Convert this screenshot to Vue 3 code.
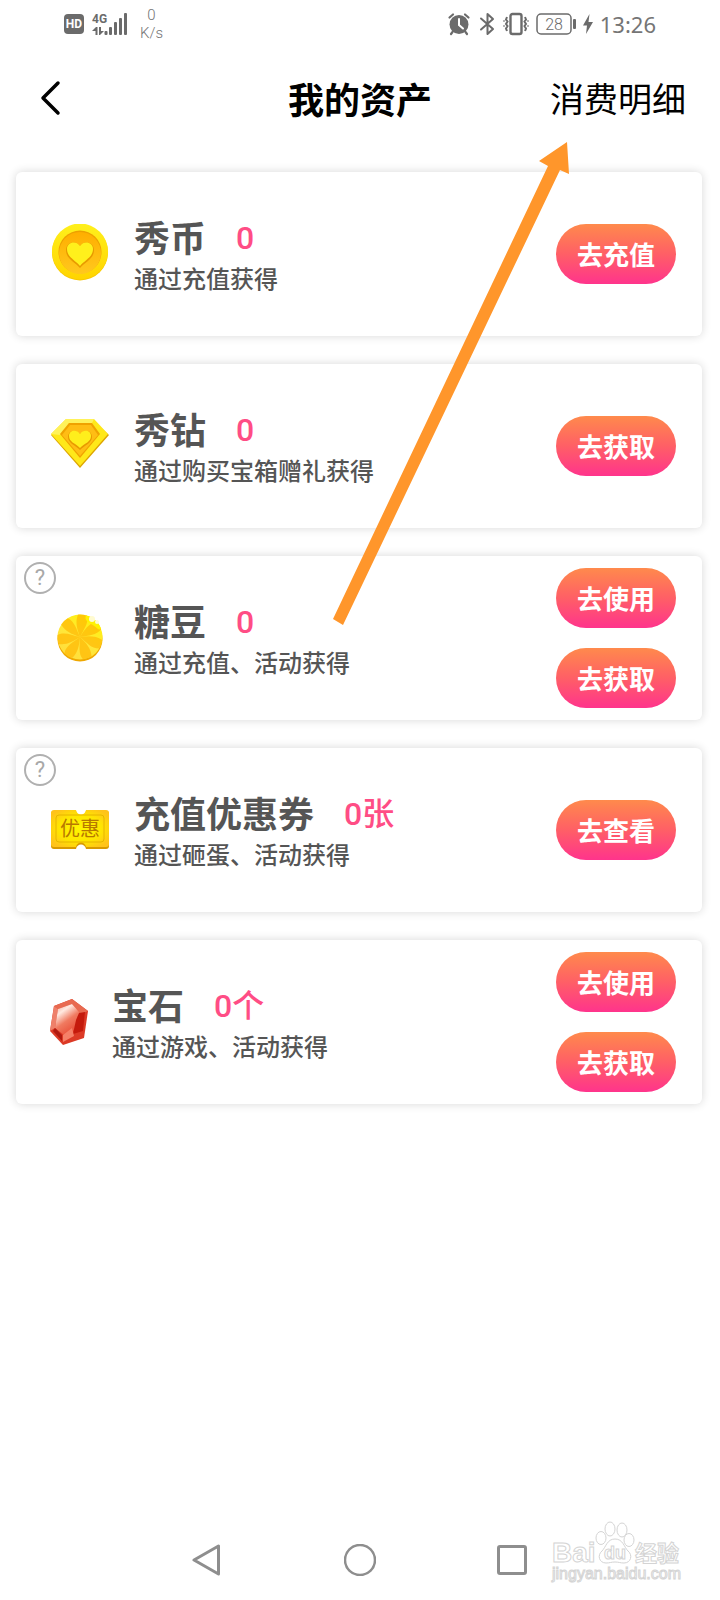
<script setup>
const assets = [
  { icon: 'coin', name: '秀币', value: '0', desc: '通过充值获得', help: false, actions: ['去充值'] },
  { icon: 'diamond', name: '秀钻', value: '0', desc: '通过购买宝箱赠礼获得', help: false, actions: ['去获取'] },
  { icon: 'candy', name: '糖豆', value: '0', desc: '通过充值、活动获得', help: true, actions: ['去使用', '去获取'] },
  { icon: 'coupon', name: '充值优惠券', value: '0张', desc: '通过砸蛋、活动获得', help: true, actions: ['去查看'] },
  { icon: 'gem', name: '宝石', value: '0个', desc: '通过游戏、活动获得', help: false, actions: ['去使用', '去获取'] },
]

// blades of the candy swirl, in degrees
const blades = Array.from({ length: 7 }, (_, i) => (i * 360) / 7)
</script>

<template>
  <div class="page">
    <div class="status">
      <div class="status-left">
        <svg width="20" height="20" viewBox="0 0 20 20">
          <rect width="20" height="20" rx="4" fill="#6b6b6b" />
          <text x="10" y="14" class="hd" text-anchor="middle">HD</text>
        </svg>
        <svg width="36" height="24" viewBox="0 0 36 24">
          <text x="0" y="11" class="fourg">4G</text>
          <g fill="#6b6b6b">
            <path d="M0 19 4 15h1.500v8H3.500v-4z" />
            <path d="M7 15h2v4h3l-4 4H7z" />
            <rect x="12.500" y="19" width="3" height="4" rx="1" />
            <rect x="17" y="15" width="3" height="8" rx="1" />
            <rect x="22" y="10" width="3" height="13" rx="1" />
            <rect x="27" y="6" width="3" height="17" rx="1" />
            <rect x="32" y="1" width="3" height="22" rx="1" />
          </g>
        </svg>
        <div class="speed"><span>0</span><span>K/s</span></div>
      </div>
      <div class="status-right">
        <svg width="24" height="24" viewBox="0 0 24 24">
          <g fill="none" stroke="#6b6b6b" stroke-width="2.200" stroke-linecap="round">
            <path d="M2.500 5.500 6 2.500M21.500 5.500 18 2.500M5.500 20 4 22M18.500 20 20 22" />
          </g>
          <circle cx="12" cy="12.500" r="9.500" fill="#6b6b6b" />
          <path d="M12 7v6l4 3.500" fill="none" stroke="#fff" stroke-width="2" stroke-linecap="round" />
        </svg>
        <svg width="18" height="24" viewBox="0 0 18 24">
          <path d="M3 6.500 15 17l-5.500 5V2L15 7 3 17.500" fill="none" stroke="#6b6b6b" stroke-width="2" stroke-linejoin="round" stroke-linecap="round" />
        </svg>
        <svg width="26" height="24" viewBox="0 0 26 24">
          <g fill="none" stroke="#6b6b6b" stroke-width="2">
            <rect x="7.500" y="2" width="11" height="20" rx="2" stroke-width="2.400" />
            <path d="M4 5l-1 2.500 1.500 2L3 12l1.500 2L3 16.500 4 19M22 5l1 2.500-1.500 2L23 12l-1.500 2 1.500 2.500L22 19" />
            <path d="M1 8v2M1 13v2M25 8v2M25 13v2" stroke-width="1" />
          </g>
        </svg>
        <svg width="40" height="22" viewBox="0 0 40 22">
          <rect x="1" y="1" width="34" height="20" rx="4" fill="none" stroke="#6b6b6b" stroke-width="1.500" />
          <rect x="37" y="6" width="3" height="10" rx="1" fill="#6b6b6b" />
          <text x="18" y="17" class="level" text-anchor="middle">28</text>
        </svg>
        <svg width="10" height="22" viewBox="0 0 10 22">
          <path d="M6.500 1 0 12.500h4L3 21l7-12H5.500z" fill="#6b6b6b" />
        </svg>
        <span class="time">13:26</span>
      </div>
    </div>

    <header class="header">
      <button class="back" aria-label="返回">
        <svg width="30" height="36" viewBox="0 0 30 36">
          <path d="M24 3 9 18l15 15" fill="none" stroke="#000" stroke-width="3.500" stroke-linecap="round" stroke-linejoin="round" />
        </svg>
      </button>
      <h1 class="title">我的资产</h1>
      <a class="detail" href="#">消费明细</a>
    </header>

    <main class="list">
      <section v-for="a in assets" :key="a.name" class="card">
        <button v-if="a.help" class="help" aria-label="说明">?</button>

        <svg v-if="a.icon === 'coin'" class="icon" width="60" height="60" viewBox="0 0 60 60">
          <defs>
            <linearGradient id="coinRim" x1="0" y1="0" x2="0" y2="1">
              <stop offset="0" stop-color="#fff01c" />
              <stop offset="1" stop-color="#ffd400" />
            </linearGradient>
            <linearGradient id="coinIn" x1="0" y1="0" x2="0" y2="1">
              <stop offset="0" stop-color="#ffae00" />
              <stop offset="1" stop-color="#ffc81e" />
            </linearGradient>
          </defs>
          <circle cx="30" cy="28.500" r="28" fill="#f8c800" />
          <circle cx="30" cy="27.500" r="28" fill="url(#coinRim)" />
          <circle cx="30" cy="28" r="21.500" fill="#eda000" />
          <circle cx="30" cy="29" r="21" fill="url(#coinIn)" />
          <path d="M30 44C25 38 16 35 16 26c0-8 10-10 14-4 4-6 14-4 14 4 0 9-9 12-14 18z" fill="#e89a00" />
          <path d="M30 42C25 36 17 33 17 25c0-7 9-9 13-3 4-6 13-4 13 3 0 8-8 11-13 17z" fill="#fff01c" />
        </svg>

        <svg v-else-if="a.icon === 'diamond'" class="icon" width="60" height="60" viewBox="0 2 60 60">
          <path d="M16 7h28l15 14-29 33L1 21z" fill="#dda400" />
          <path d="M16 5h28l14 15-28 32L1 20z" fill="#ffe81a" />
          <path d="M16 5 19 9h23l2-4zM1 20l9 1 9-12-3-4z" fill="#fff25a" />
          <path d="M19 9h23l8 11-20 24L10 20z" fill="#f0a200" />
          <path d="M20 11h21l7 10-18 21-18-21z" fill="#ffbd14" />
          <path d="M30 36c-5-5-12-7-12-13 0-7 8-8 12-3 4-5 12-4 12 3 0 6-7 8-12 13z" fill="#e89a00" />
          <path d="M30 34c-5-5-11-6-11-12 0-6 8-7 11-2 3-5 11-4 11 2 0 6-6 7-11 12z" fill="#ffee1c" />
        </svg>

        <svg v-else-if="a.icon === 'candy'" class="icon" width="60" height="60" viewBox="0 0 60 60">
          <defs>
            <linearGradient id="candyBase" x1=".8" y1="0" x2=".2" y2="1">
              <stop offset="0" stop-color="#fff200" />
              <stop offset=".5" stop-color="#ffe83a" />
              <stop offset="1" stop-color="#ffdc3c" />
            </linearGradient>
          </defs>
          <circle cx="30" cy="31" r="22.500" fill="#efa800" />
          <circle cx="30" cy="29" r="22.500" fill="url(#candyBase)" />
          <path v-for="b in blades" :key="b" d="M30 29C27 21 25 14 28 6.600q5-.500 9 1C39 15 34 21 30 29z" fill="#ffb400" opacity=".65" :transform="`rotate(${b} 30 29)`" />
          <path d="M36 7.500c7 1 13 7 15 13-2 3-5-2-9-4s-8-5-6-9z" fill="#fff200" />
          <circle cx="42" cy="11" r="3" fill="#fffbd0" />
          <circle cx="47" cy="14" r="2" fill="#fffbd0" />
        </svg>

        <svg v-else-if="a.icon === 'coupon'" class="icon" width="60" height="60" viewBox="0 0 60 60">
          <defs>
            <radialGradient id="ticket" cx=".5" cy=".5" r=".6">
              <stop offset="0" stop-color="#fff500" />
              <stop offset=".6" stop-color="#ffe600" />
              <stop offset="1" stop-color="#ffc31a" />
            </radialGradient>
          </defs>
          <path d="M4 11h22c1 6 9 6 10 0h20q3 0 3 3v32q0 3-3 3H36c-1-6-9-6-10 0H4q-3 0-3-3V14q0-3 3-3z" fill="#d99a00" />
          <path d="M4 10h22c1 6 9 6 10 0h20q3 0 3 3v31q0 3-3 3H36c-1-6-9-6-10 0H4q-3 0-3-3V13q0-3 3-3z" fill="url(#ticket)" />
          <rect x="6" y="15" width="48" height="27" rx="3" fill="none" stroke="#e6b400" />
          <text x="30" y="36" class="ticket-text" text-anchor="middle">优惠</text>
        </svg>

        <svg v-else class="icon" width="38" height="60" viewBox="0 0 38 60">
          <defs>
            <linearGradient id="gemFace" x1="0" y1="0" x2=".6" y2="1">
              <stop offset="0" stop-color="#f3a08c" />
              <stop offset=".3" stop-color="#ffe9e0" />
              <stop offset=".6" stop-color="#f07a60" />
              <stop offset="1" stop-color="#e84a34" />
            </linearGradient>
          </defs>
          <path d="M22 7 38 19 34 46 13 53 0 39 4 14z" fill="#dc3a26" />
          <path d="M22 7 38 19 31 22 22 12 8 17 4 14z" fill="#e86a50" />
          <path d="M4 14 8 17 5 36 0 39z" fill="#ee806a" />
          <path d="M22 12 31 22 22 42 14 43 5 36 8 17z" fill="url(#gemFace)" />
          <path d="M29 21 35 20 33 39 23 42 26 28z" fill="#c41a0c" />
          <path d="M5 36 12 43 12 49 3 39z" fill="#b01a10" />
          <path d="M13 43 22 36 24 44 13 50z" fill="#f58068" />
        </svg>

        <div class="info">
          <div class="row">
            <h2 class="name">{{ a.name }}</h2>
            <span class="value">{{ a.value }}</span>
          </div>
          <p class="desc">{{ a.desc }}</p>
        </div>

        <div class="actions">
          <button v-for="t in a.actions" :key="t" class="btn">{{ t }}</button>
        </div>
      </section>
    </main>

    <nav class="nav">
      <button class="nav-btn" aria-label="返回键">
        <svg width="32" height="32" viewBox="0 0 32 32">
          <path d="M26.500 2v28L2 16z" fill="none" stroke="#8e8e8e" stroke-width="3" stroke-linejoin="round" />
        </svg>
      </button>
      <button class="nav-btn" aria-label="主页键">
        <svg width="32" height="32" viewBox="0 0 32 32">
          <circle cx="16" cy="16" r="15" fill="none" stroke="#8e8e8e" stroke-width="2.500" />
        </svg>
      </button>
      <button class="nav-btn" aria-label="多任务键">
        <svg width="32" height="32" viewBox="0 0 32 32">
          <rect x="2.500" y="2.500" width="27" height="27" rx="1.500" fill="none" stroke="#8e8e8e" stroke-width="3" />
        </svg>
      </button>
    </nav>

    <svg class="watermark" width="134" height="66" viewBox="0 0 134 66">
      <g fill="#fff" stroke="#d4d4d4">
        <text x="2" y="44" class="wm-brand">Bai</text>
        <ellipse cx="51" cy="20" rx="5" ry="6.500" />
        <ellipse cx="60" cy="11" rx="5" ry="7" />
        <ellipse cx="72" cy="12" rx="5" ry="7" />
        <ellipse cx="79" cy="22" rx="5" ry="6.500" />
        <path d="M65 21c8 0 9 8 13 12 5 4 3 12-4 12-4 0-5-1-9-1s-5 1-9 1c-7 0-9-8-4-12 4-4 5-12 13-12z" />
        <text x="65" y="41" class="wm-du" text-anchor="middle">du</text>
        <text x="85" y="43" class="wm-cn">经验</text>
        <text x="2" y="61" class="wm-url">jingyan.baidu.com</text>
      </g>
    </svg>

    <svg class="arrow" width="236" height="483" viewBox="333 142 236 483">
      <path d="M333 619 548 166 539 161 567 142 569 174 560 170 343 625z" fill="#ff962b" />
    </svg>
  </div>
</template>

<style>
body {
  background: #fff;
}
</style>

<style scoped>
.page {
  position: relative;
  display: flex;
  flex-direction: column;
  min-height: 100vh;
  background: #fff;
  font-family: "Noto Sans CJK SC", sans-serif;
}
button {
  padding: 0;
  border: 0;
  background: none;
  font-family: inherit;
  cursor: pointer;
}
svg {
  display: block;
  flex: none;
}

.status {
  display: flex;
  align-items: center;
  justify-content: space-between;
  height: 48px;
  padding: 0 64px;
  color: #757575;
}
.status-left {
  display: flex;
  align-items: center;
  gap: 8px;
}
.status-right {
  display: flex;
  align-items: center;
  gap: 7px;
}
.hd {
  font: 700 12px Roboto, sans-serif;
  fill: #fff;
}
.fourg {
  font: 700 12px Roboto, sans-serif;
  fill: #6b6b6b;
}
.level {
  font: 300 16px Roboto, sans-serif;
  fill: #6b6b6b;
}
.speed {
  display: flex;
  flex-direction: column;
  align-items: center;
  margin-left: 4px;
  font: 300 15px/18px Roboto, sans-serif;
}
.time {
  font: 400 22px/30px "Noto Sans", sans-serif;
}

.header {
  display: grid;
  grid-template-columns: 1fr auto 1fr;
  align-items: center;
  height: 100px;
  padding: 0 34px;
}
.back {
  justify-self: start;
}
.title {
  margin: 0;
  font-size: 36px;
  font-weight: 700;
  line-height: 48px;
  color: #000;
}
.detail {
  justify-self: end;
  font-size: 34px;
  line-height: 48px;
  color: #000;
  text-decoration: none;
}

.list {
  display: flex;
  flex-direction: column;
  gap: 28px;
  padding: 24px 18px 0 16px;
}
.card {
  position: relative;
  display: flex;
  align-items: center;
  gap: 24px;
  min-height: 164px;
  padding: 12px 26px 12px 34px;
  box-sizing: border-box;
  border-radius: 6px;
  background: #fff;
  box-shadow: 0 0 10px rgba(0, 0, 0, 0.16);
}
.help {
  position: absolute;
  top: 6px;
  left: 8px;
  width: 32px;
  height: 32px;
  border: 2px solid #b0b0b0;
  border-radius: 50%;
  font: 400 22px/28px Roboto, sans-serif;
  color: #a8a8a8;
}
.ticket-text {
  font: 400 20px "Noto Sans CJK SC", sans-serif;
  fill: #b87800;
}
.info {
  flex: 1;
}
.row {
  display: flex;
  align-items: flex-end;
  gap: 30px;
}
.name {
  margin: 0;
  font-size: 36px;
  font-weight: 700;
  line-height: 48px;
  color: #555;
}
.value {
  font: 500 32px/44px Roboto, "Noto Sans CJK SC", sans-serif;
  color: #ff4d85;
}
.desc {
  margin: 0;
  font-size: 24px;
  font-weight: 500;
  line-height: 36px;
  color: #555;
}
.actions {
  display: flex;
  flex-direction: column;
  gap: 20px;
}
.btn {
  width: 120px;
  height: 60px;
  border-radius: 30px;
  background: linear-gradient(#ff8a4c, #ff5f66 50%, #ff348c);
  font-size: 26px;
  font-weight: 700;
  line-height: 60px;
  color: #fff;
}

.nav {
  display: flex;
  align-items: center;
  justify-content: center;
  gap: 120px;
  height: 80px;
  margin-top: auto;
}

.watermark {
  position: absolute;
  right: 36px;
  bottom: 16px;
}
.wm-brand {
  font: 700 28px "Liberation Sans", sans-serif;
}
.wm-du {
  font: 700 18px "Liberation Sans", sans-serif;
}
.wm-cn {
  font: 700 22px "Noto Sans CJK SC", sans-serif;
}
.wm-url {
  font: 400 16px "Liberation Sans", sans-serif;
}

/* pointer drawn over the cards, towards the link in the header */
.arrow {
  position: absolute;
  top: 142px;
  right: 151px;
  pointer-events: none;
}
</style>
